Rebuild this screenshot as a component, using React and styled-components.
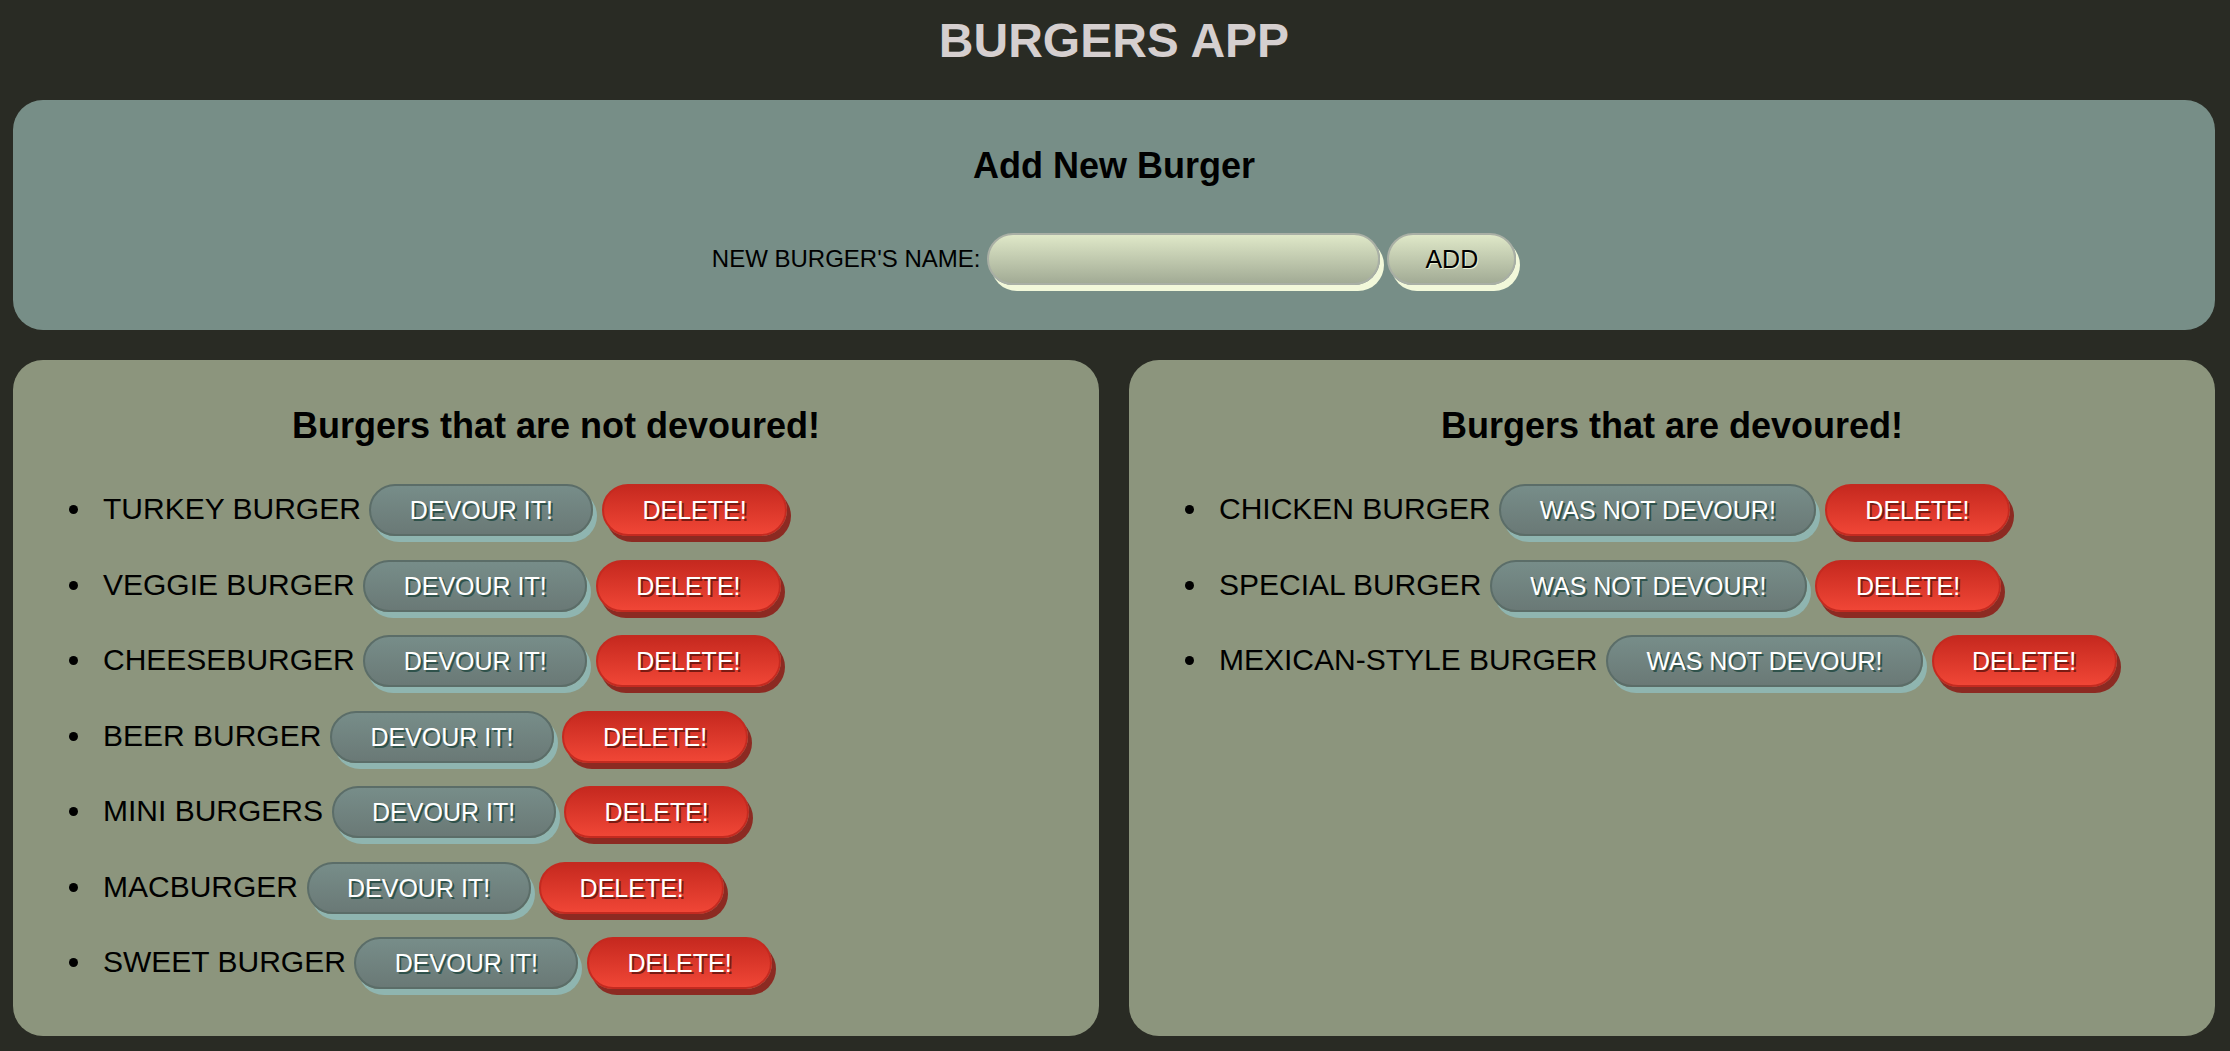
import React from "react";
import styled, { createGlobalStyle } from "styled-components";

const notDevoured = [
  "TURKEY BURGER",
  "VEGGIE BURGER",
  "CHEESEBURGER",
  "BEER BURGER",
  "MINI BURGERS",
  "MACBURGER",
  "SWEET BURGER",
];
const devoured = ["CHICKEN BURGER", "SPECIAL BURGER", "MEXICAN-STYLE BURGER"];

const tones = {
  devour: {
    border: "#5b6d68",
    top: "#778d89",
    bottom: "#6a7976",
    shadow: "#8fb5b0",
    color: "#fff",
    textShadow: "#2f524b",
  },
  delete: {
    border: "#c42a20",
    top: "#c6291f",
    bottom: "#f04636",
    shadow: "#8c2a22",
    color: "#fff",
    textShadow: "#7a1b13",
  },
  add: {
    border: "#a9afa5",
    top: "#dfe8c8",
    bottom: "#a2ab95",
    shadow: "#f2f8da",
    color: "#000",
    textShadow: "#eef3d6",
  },
};

const GlobalStyle = createGlobalStyle`
  * { box-sizing: border-box; }
  html, body {
    margin: 0;
    background: #292b24;
  }
  body {
    font-family: "Liberation Sans", Arial, sans-serif;
  }
`;

const Page = styled.div`
  padding: 0 15px 15px 13px;
`;

const Title = styled.h1`
  margin: 13px 0 32px;
  text-align: center;
  font-size: 48px;
  line-height: 55px;
  font-weight: bold;
  color: #d5cfcf;
`;

const Panel = styled.section`
  background: ${(p) => (p.$tone === "blue" ? "#778e87" : "#8c957d")};
  border-radius: 30px;
  padding: 15px;
`;

const PanelTitle = styled.h2`
  margin: 30px 0;
  text-align: center;
  font-size: 36px;
  line-height: 41px;
  color: #000;
`;

const Form = styled.form`
  display: flex;
  justify-content: center;
  align-items: center;
  gap: 7px;
  margin: 47px 0 30px;
  font-size: 24px;
  color: #000;
`;

const NameInput = styled.input`
  width: 393px;
  height: 52px;
  border: 2px solid ${tones.add.border};
  border-radius: 26px;
  background: linear-gradient(${tones.add.top}, ${tones.add.bottom});
  box-shadow: 4px 6px 0 ${tones.add.shadow};
  font-family: inherit;
  font-size: 24px;
  padding: 0 20px;
  outline: none;
`;

const Pill = styled.button`
  font-family: inherit;
  font-size: 25px;
  line-height: 28px;
  padding: 10px ${(p) => (p.$variant === "add" ? "36px" : "38.5px")};
  border-radius: 27px;
  border: 2px solid ${(p) => tones[p.$variant].border};
  color: ${(p) => tones[p.$variant].color};
  text-shadow: ${(p) =>
    p.$variant === "add"
      ? `1px 1px 0 ${tones.add.textShadow}`
      : `2px 2px 0 ${tones[p.$variant].textShadow}`};
  background: linear-gradient(
    ${(p) => tones[p.$variant].top},
    ${(p) => tones[p.$variant].bottom}
  );
  box-shadow: 4px 6px 0 ${(p) => tones[p.$variant].shadow};
  white-space: nowrap;
  cursor: pointer;
`;

const Columns = styled.div`
  display: grid;
  grid-template-columns: 1fr 1fr;
  gap: 30px;
  margin-top: 30px;
`;

const List = styled.ul`
  margin: 38px 0 32px;
  padding-left: 66px;
  font-size: 30px;
  color: #000;
`;

const Item = styled.li`
  padding-left: 9px;
  & + & {
    margin-top: 23.5px;
  }
`;

const Row = styled.div`
  display: flex;
  align-items: baseline;
  column-gap: 8.5px;
`;

const BurgerList = ({ items, action }) => (
  <List>
    {items.map((name) => (
      <Item key={name}>
        <Row>
          <span>{name}</span>
          <Pill type="button" $variant="devour">
            {action}
          </Pill>
          <Pill type="button" $variant="delete">
            DELETE!
          </Pill>
        </Row>
      </Item>
    ))}
  </List>
);

const App = () => {
  return (
    <Page>
      <GlobalStyle />
      <Title>BURGERS APP</Title>
      <Panel $tone="blue">
        <PanelTitle>Add New Burger</PanelTitle>
        <Form onSubmit={(e) => e.preventDefault()}>
          <label htmlFor="burger-name">NEW BURGER'S NAME:</label>
          <NameInput id="burger-name" type="text" />
          <Pill type="submit" $variant="add">
            ADD
          </Pill>
        </Form>
      </Panel>
      <Columns>
        <Panel>
          <PanelTitle>Burgers that are not devoured!</PanelTitle>
          <BurgerList items={notDevoured} action="DEVOUR IT!" />
        </Panel>
        <Panel>
          <PanelTitle>Burgers that are devoured!</PanelTitle>
          <BurgerList items={devoured} action="WAS NOT DEVOUR!" />
        </Panel>
      </Columns>
    </Page>
  );
};

export default App;
